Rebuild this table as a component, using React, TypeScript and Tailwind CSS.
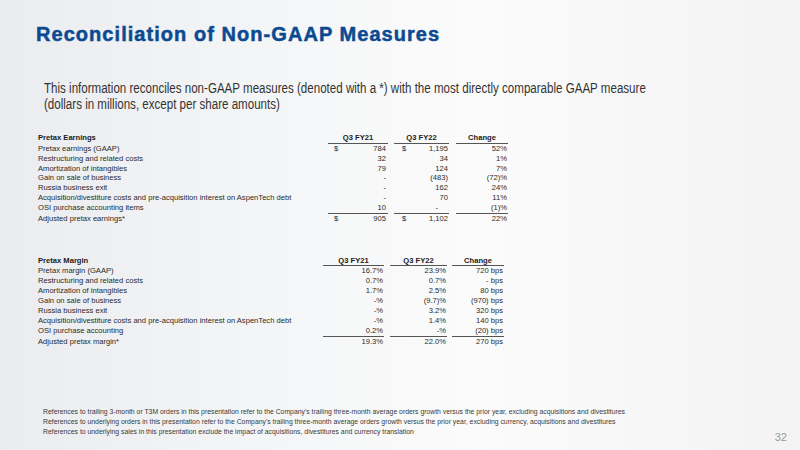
import React from "react";

const SANS = "'Liberation Sans',Arial,sans-serif";

type ERow = { label: string; c1: string; c2: string; c3: string; dollar?: boolean; line?: boolean; c2pr?: string };

const earnings: ERow[] = [
  { label: "Pretax earnings (GAAP)", c1: "784", c2: "1,195", c3: "52%", dollar: true },
  { label: "Restructuring and related costs", c1: "32", c2: "34", c3: "1%" },
  { label: "Amortization of intangibles", c1: "79", c2: "124", c3: "7%" },
  { label: "Gain on sale of business", c1: "-", c2: "(483)", c3: "(72)%" },
  { label: "Russia business exit", c1: "-", c2: "162", c3: "24%" },
  { label: "Acquisition/divestiture costs and pre-acquisition interest on AspenTech debt", c1: "-", c2: "70", c3: "11%" },
  { label: "OSI purchase accounting items", c1: "10", c2: "-", c3: "(1)%", line: true, c2pr: "pr-[11px]" },
  { label: "Adjusted pretax earnings*", c1: "905", c2: "1,102", c3: "22%", dollar: true },
];

const margins: ERow[] = [
  { label: "Pretax margin (GAAP)", c1: "16.7%", c2: "23.9%", c3: "720 bps" },
  { label: "Restructuring and related costs", c1: "0.7%", c2: "0.7%", c3: "- bps" },
  { label: "Amortization of intangibles", c1: "1.7%", c2: "2.5%", c3: "80 bps" },
  { label: "Gain on sale of business", c1: "-%", c2: "(9.7)%", c3: "(970) bps" },
  { label: "Russia business exit", c1: "-%", c2: "3.2%", c3: "320 bps" },
  { label: "Acquisition/divestiture costs and pre-acquisition interest on AspenTech debt", c1: "-%", c2: "1.4%", c3: "140 bps" },
  { label: "OSI purchase accounting", c1: "0.2%", c2: "-%", c3: "(20) bps", line: true },
  { label: "Adjusted pretax margin*", c1: "19.3%", c2: "22.0%", c3: "270 bps" },
];

function EarningsTable() {
  const grid = "grid grid-cols-[290px_60px_6px_55px_7px_52px]";
  return (
    <div className="pl-[38px] text-[7.6px] text-[#2a2a2a]">
      <div className={`${grid} leading-[9px] font-bold text-[#1a1a1a]`}>
        <div>Pretax Earnings</div>
        <div className="text-center border-b border-[#555] pb-[1px]">Q3 FY21</div>
        <div />
        <div className="text-center border-b border-[#555] pb-[1px]">Q3 FY22</div>
        <div />
        <div className="text-center border-b border-[#555] pb-[1px]">Change</div>
      </div>
      {earnings.map((r) => (
        <div key={r.label} className={`${grid} leading-[9.8px]`}>
          <div className="whitespace-nowrap">{r.label}</div>
          <div className={`flex justify-between pl-[6px] pr-[2px] ${r.line ? "border-b border-[#555]" : ""}`}>
            <span>{r.dollar ? "$" : ""}</span>
            <span>{r.c1}</span>
          </div>
          <div />
          <div className={`flex justify-between pl-[8px] ${r.c2pr ?? "pr-[1px]"} ${r.line ? "border-b border-[#555]" : ""}`}>
            <span>{r.dollar ? "$" : ""}</span>
            <span>{r.c2}</span>
          </div>
          <div />
          <div className={`text-right pr-[1px] ${r.line ? "border-b border-[#555]" : ""}`}>{r.c3}</div>
        </div>
      ))}
    </div>
  );
}

function MarginTable() {
  const grid = "grid grid-cols-[285px_61px_6px_57px_5px_52px]";
  return (
    <div className="pl-[38px] text-[7.6px] text-[#2a2a2a]">
      <div className={`${grid} leading-[9px] font-bold text-[#1a1a1a]`}>
        <div>Pretax Margin</div>
        <div className="text-center border-b border-[#555]">Q3 FY21</div>
        <div />
        <div className="text-center border-b border-[#555]">Q3 FY22</div>
        <div />
        <div className="text-center border-b border-[#555]">Change</div>
      </div>
      {margins.map((r) => (
        <div key={r.label} className={`${grid} leading-[10px]`}>
          <div className="whitespace-nowrap">{r.label}</div>
          <div className={`text-right pr-[1px] ${r.line ? "border-b border-[#555]" : ""}`}>{r.c1}</div>
          <div />
          <div className={`text-right pr-[1px] ${r.line ? "border-b border-[#555]" : ""}`}>{r.c2}</div>
          <div />
          <div className={`text-right pr-[1px] ${r.line ? "border-b border-[#555]" : ""}`}>{r.c3}</div>
        </div>
      ))}
    </div>
  );
}

export default function App() {
  return (
    <div
      className="w-[800px] h-[450px] overflow-hidden flex flex-col bg-[linear-gradient(90deg,#eaecef_0%,#f6f7f8_40%,#fbfbfb_60%,#f3f3f3_100%)]"
      style={{ fontFamily: SANS }}
    >
      <h1 className="pl-[36px] pt-[22px] text-[20px] leading-[24px] font-bold tracking-[1.05px] text-[#0b4a91] [-webkit-text-stroke:0.5px_#0b4a91]">
        Reconciliation of Non-GAAP Measures
      </h1>
      <div className="pl-[44px] mt-[34px] text-[14px] leading-[16px] text-[#333] whitespace-nowrap">
        <div className="origin-left scale-x-[0.826]">This information reconciles non-GAAP measures (denoted with a *) with the most directly comparable GAAP measure</div>
        <div className="origin-left scale-x-[0.826]">(dollars in millions, except per share amounts)</div>
      </div>
      <div className="mt-[21px]">
        <EarningsTable />
      </div>
      <div className="mt-[33px]">
        <MarginTable />
      </div>
      <div className="flex-1" />
      <div className="flex items-end justify-between pl-[43px] pr-[13px] pb-[7px]">
        <div className="text-[6.85px] leading-[10px] text-[#3a3a3a] pb-[6px]">
          <div>References to trailing 3-month or T3M orders in this presentation refer to the Company's trailing three-month average orders growth versus the prior year, excluding acquisitions and divestitures</div>
          <div>References to underlying orders in this presentation refer to the Company's trailing three-month average orders growth versus the prior year, excluding currency, acquisitions and divestitures</div>
          <div>References to underlying sales in this presentation exclude the impact of acquisitions, divestitures and currency translation</div>
        </div>
        <div className="text-[11px] leading-[12px] text-[#9a9a9a]">32</div>
      </div>
    </div>
  );
}
